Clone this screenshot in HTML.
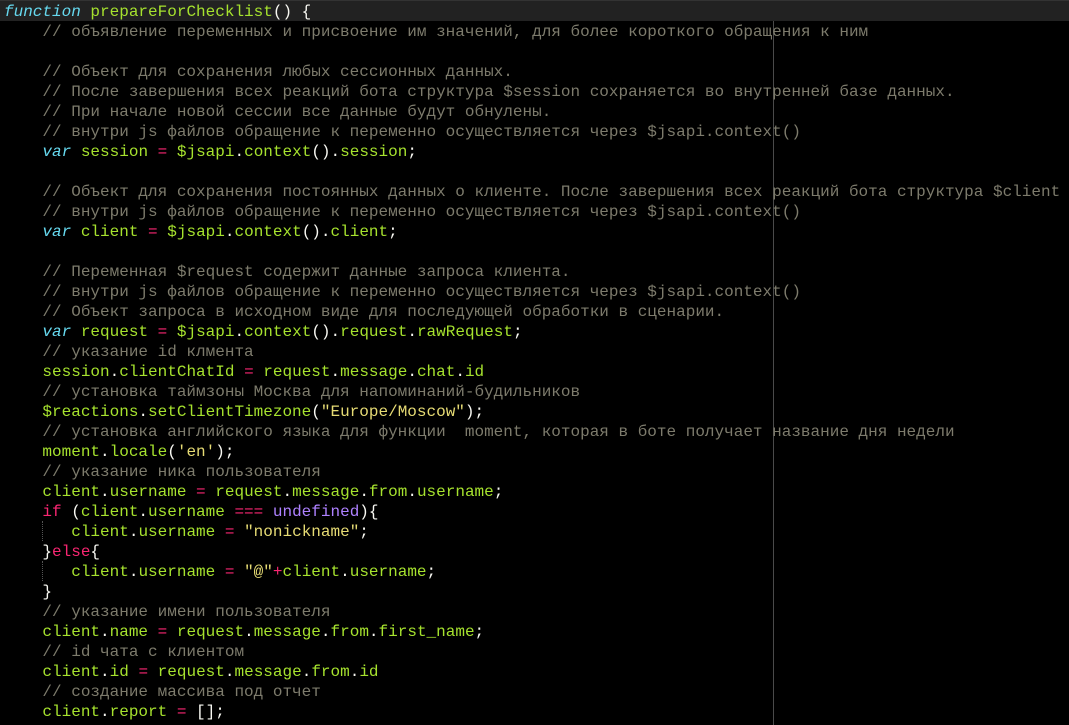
<!DOCTYPE html>
<html><head><meta charset="utf-8"><style>
html,body{margin:0;padding:0;background:#000;width:1069px;height:725px;overflow:hidden}
.hl{position:absolute;left:0;top:0;width:1069px;height:21px;background:#222;border-top:1px solid #333;box-sizing:border-box}
.ruler{position:absolute;left:773px;top:21px;width:1px;height:704px;background:#4a4a4a}
.guide{position:absolute;left:42px;width:0;border-left:1px dotted #555}
pre{position:absolute;left:4px;top:2px;margin:0;font-family:"Liberation Mono","DejaVu Sans Mono",monospace;font-size:16px;line-height:20px;color:#f8f8f2;white-space:pre}
.c{color:#7d7b6c}.g{color:#a6e22e}.k{color:#66d9ef;font-style:italic}.o{color:#f92672}.s{color:#e6db74}.p{color:#ae81ff}
</style></head><body>
<div class="hl"></div>
<div class="ruler"></div>
<div class="guide" style="top:521px;height:20px"></div>
<div class="guide" style="top:561px;height:20px"></div>
<pre><span class="k">function</span> <span class="g">prepareForChecklist</span>() {
    <span class="c">// объявление переменных и присвоение им значений, для более короткого обращения к ним</span>

    <span class="c">// Объект для сохранения любых сессионных данных.</span>
    <span class="c">// После завершения всех реакций бота структура $session сохраняется во внутренней базе данных.</span>
    <span class="c">// При начале новой сессии все данные будут обнулены.</span>
    <span class="c">// внутри js файлов обращение к переменно осуществляется через $jsapi.context()</span>
    <span class="k">var</span> <span class="g">session</span> <span class="o">=</span> <span class="g">$jsapi</span>.<span class="g">context</span>().<span class="g">session</span>;

    <span class="c">// Объект для сохранения постоянных данных о клиенте. После завершения всех реакций бота структура $client</span>
    <span class="c">// внутри js файлов обращение к переменно осуществляется через $jsapi.context()</span>
    <span class="k">var</span> <span class="g">client</span> <span class="o">=</span> <span class="g">$jsapi</span>.<span class="g">context</span>().<span class="g">client</span>;

    <span class="c">// Переменная $request содержит данные запроса клиента.</span>
    <span class="c">// внутри js файлов обращение к переменно осуществляется через $jsapi.context()</span>
    <span class="c">// Объект запроса в исходном виде для последующей обработки в сценарии.</span>
    <span class="k">var</span> <span class="g">request</span> <span class="o">=</span> <span class="g">$jsapi</span>.<span class="g">context</span>().<span class="g">request</span>.<span class="g">rawRequest</span>;
    <span class="c">// указание id клмента</span>
    <span class="g">session</span>.<span class="g">clientChatId</span> <span class="o">=</span> <span class="g">request</span>.<span class="g">message</span>.<span class="g">chat</span>.<span class="g">id</span>
    <span class="c">// установка таймзоны Москва для напоминаний-будильников</span>
    <span class="g">$reactions</span>.<span class="g">setClientTimezone</span>(<span class="s">"Europe/Moscow"</span>);
    <span class="c">// установка английского языка для функции  moment, которая в боте получает название дня недели</span>
    <span class="g">moment</span>.<span class="g">locale</span>(<span class="s">'en'</span>);
    <span class="c">// указание ника пользователя</span>
    <span class="g">client</span>.<span class="g">username</span> <span class="o">=</span> <span class="g">request</span>.<span class="g">message</span>.<span class="g">from</span>.<span class="g">username</span>;
    <span class="o">if</span> (<span class="g">client</span>.<span class="g">username</span> <span class="o">===</span> <span class="p">undefined</span>){
       <span class="g">client</span>.<span class="g">username</span> <span class="o">=</span> <span class="s">"nonickname"</span>;
    }<span class="o">else</span>{
       <span class="g">client</span>.<span class="g">username</span> <span class="o">=</span> <span class="s">"@"</span><span class="o">+</span><span class="g">client</span>.<span class="g">username</span>;
    }
    <span class="c">// указание имени пользователя</span>
    <span class="g">client</span>.<span class="g">name</span> <span class="o">=</span> <span class="g">request</span>.<span class="g">message</span>.<span class="g">from</span>.<span class="g">first_name</span>;
    <span class="c">// id чата с клиентом</span>
    <span class="g">client</span>.<span class="g">id</span> <span class="o">=</span> <span class="g">request</span>.<span class="g">message</span>.<span class="g">from</span>.<span class="g">id</span>
    <span class="c">// создание массива под отчет</span>
    <span class="g">client</span>.<span class="g">report</span> <span class="o">=</span> [];
</pre>
</body></html>
